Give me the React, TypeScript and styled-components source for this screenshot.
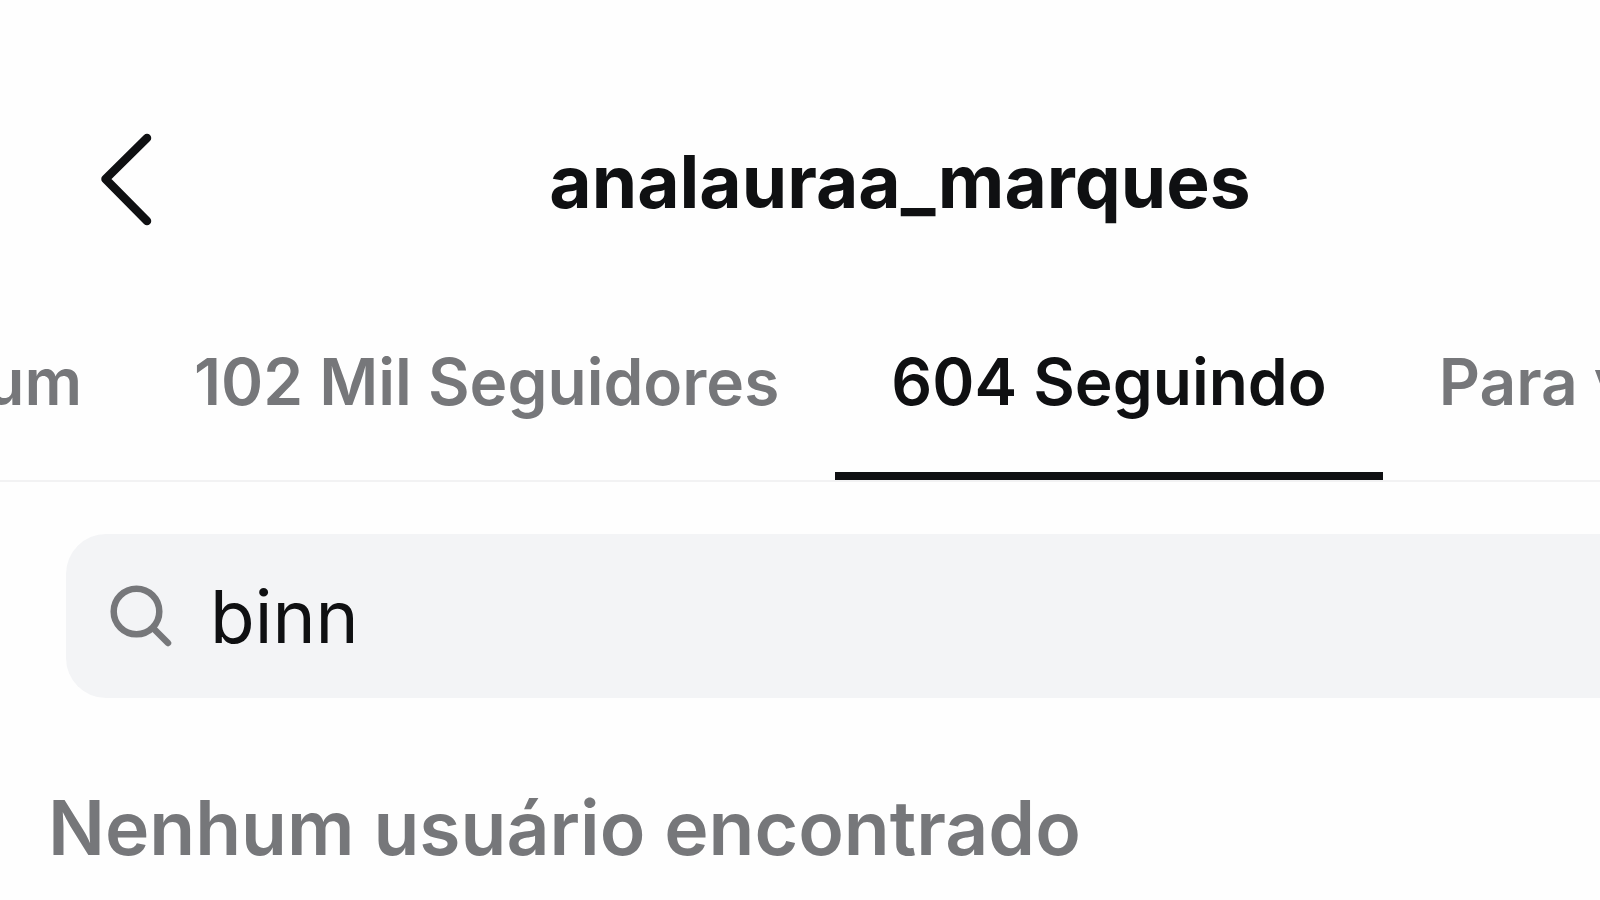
import React from "react";
import styled, { createGlobalStyle } from "styled-components";

const ink = "#0f1012";
const muted = "#76777a";

const GlobalStyle = createGlobalStyle`
  * { box-sizing: border-box; }
  body { margin: 0; background: #fefefe; }
  body, button, input { font-family: Inter, "Liberation Sans", sans-serif; }
`;

const Page = styled.main`
  color: ${ink};
  overflow: hidden;
`;

const Header = styled.header`
  display: grid;
  grid-template-columns: 200px 1fr;
  align-items: center;
  padding: 130px 0 10px;
`;

const BackButton = styled.button`
  display: flex;
  width: 60px;
  margin-left: 96px;
  padding: 0;
  border: 0;
  background: none;
  color: inherit;
`;

const Username = styled.h1`
  margin: 0;
  padding-top: 4px;
  text-align: center;
  font-size: 73px;
  line-height: 88px;
  font-weight: 700;
`;

const Tabs = styled.nav`
  display: flex;
  padding-top: 102px;
  border-bottom: 2px solid #f2f2f3;
`;

const Tab = styled.button<{ $active?: boolean }>`
  flex: none;
  padding: 0 56px 50px;
  border: 0;
  border-bottom: 8px solid ${(p) => (p.$active ? ink : "transparent")};
  background: none;
  color: ${(p) => (p.$active ? ink : muted)};
  font-size: 64px;
  line-height: 80px;
  font-weight: 600;
  white-space: nowrap;
`;

/* The first tab is mostly scrolled out past the left edge. */
const ScrolledTab = styled(Tab)`
  display: flex;
  justify-content: flex-end;
  width: 138px;
`;

const SearchField = styled.label`
  display: flex;
  align-items: center;
  gap: 38px;
  height: 164px;
  margin: 52px -40px 0 66px;
  padding-left: 42px;
  border-radius: 40px;
  background: #f3f4f6;
  color: ${muted};
`;

const SearchInput = styled.input`
  flex: 1;
  min-width: 0;
  padding: 2px 0 0;
  border: 0;
  outline: 0;
  background: none;
  color: ${ink};
  font-size: 73px;
  line-height: 88px;
`;

const EmptyMessage = styled.p`
  margin: 86px 48px 0;
  color: ${muted};
  font-size: 75px;
  line-height: 88px;
  font-weight: 600;
  white-space: nowrap;
`;

export default function App() {
  return (
    <Page>
      <GlobalStyle />
      <Header>
        <BackButton aria-label="Voltar">
          <svg width="60" height="100" viewBox="0 0 60 100" fill="none" stroke="currentColor" strokeWidth="8.5" strokeLinecap="round" strokeLinejoin="round">
            <path d="M51 8 9.500 49l41.500 42" />
          </svg>
        </BackButton>
        <Username>analauraa_marques</Username>
      </Header>
      <Tabs>
        <ScrolledTab>em comum</ScrolledTab>
        <Tab>102 Mil Seguidores</Tab>
        <Tab $active>604 Seguindo</Tab>
        <Tab>Para você</Tab>
      </Tabs>
      <SearchField>
        <svg width="64" height="64" viewBox="0 0 64 64" fill="none" stroke="currentColor" strokeWidth="6.5" strokeLinecap="round">
          <circle cx="28.5" cy="27.5" r="22.8" />
          <path d="m45.500 44.500 14.500 14.500" />
        </svg>
        <SearchInput aria-label="Pesquisar" defaultValue="binn" />
      </SearchField>
      <EmptyMessage>Nenhum usuário encontrado</EmptyMessage>
    </Page>
  );
}
